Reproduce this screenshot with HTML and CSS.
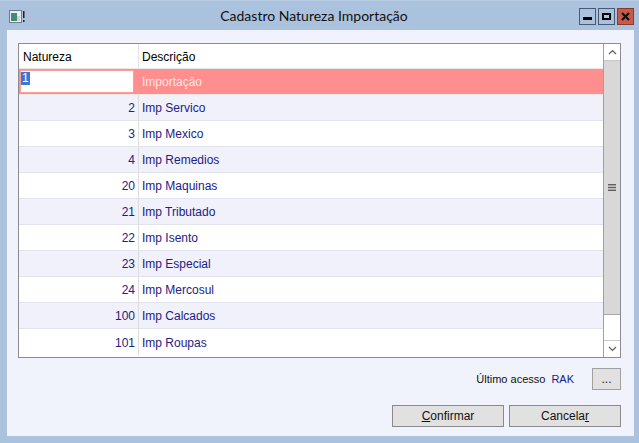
FILE: index.html
```html
<!DOCTYPE html>
<html>
<head>
<meta charset="utf-8">
<link rel="stylesheet" href="styles.css">
</head>
<body>
<div class="window">
  <div class="titlebar">
    <div class="app-icon">
      <svg width="16" height="14" viewBox="0 0 16 14">
        <rect x="0.5" y="0.5" width="12" height="12" fill="#e8ecf0" stroke="#6d7d8a"/>
        <rect x="2" y="3" width="6" height="8" fill="#3f8a78"/>
        <rect x="8" y="6" width="3" height="5" fill="#c9d3da"/>
        <rect x="14" y="1" width="1.5" height="7" fill="#222"/>
        <rect x="14" y="10" width="1.5" height="2" fill="#222"/>
      </svg>
    </div>
    <div class="title">Cadastro Natureza Importação</div>
    <div class="controls">
      <div class="ctl"><span class="min-bar"></span></div>
      <div class="ctl"><span class="max-box"></span></div>
      <div class="ctl close">
        <svg width="9" height="9" viewBox="0 0 9 9"><path d="M1 1 L8 8 M8 1 L1 8" stroke="#111" stroke-width="2.2"/></svg>
      </div>
    </div>
  </div>
  <div class="client">
    <div class="grid">
      <div class="table">
        <div class="row header">
          <div class="c-num">Natureza</div>
          <div class="c-desc">Descrição</div>
        </div>
        <div class="row selected">
          <div class="c-num"><div class="editor"><span class="sel">1</span></div></div>
          <div class="c-desc">Importação</div>
        </div>
        <div class="row alt"><div class="c-num">2</div><div class="c-desc">Imp Servico</div></div>
        <div class="row"><div class="c-num">3</div><div class="c-desc">Imp Mexico</div></div>
        <div class="row alt"><div class="c-num">4</div><div class="c-desc">Imp Remedios</div></div>
        <div class="row"><div class="c-num">20</div><div class="c-desc">Imp Maquinas</div></div>
        <div class="row alt"><div class="c-num">21</div><div class="c-desc">Imp Tributado</div></div>
        <div class="row"><div class="c-num">22</div><div class="c-desc">Imp Isento</div></div>
        <div class="row alt"><div class="c-num">23</div><div class="c-desc">Imp Especial</div></div>
        <div class="row"><div class="c-num">24</div><div class="c-desc">Imp Mercosul</div></div>
        <div class="row alt"><div class="c-num">100</div><div class="c-desc">Imp Calcados</div></div>
        <div class="row last"><div class="c-num">101</div><div class="c-desc">Imp Roupas</div></div>
      </div>
      <div class="scrollbar">
        <div class="sb-btn">
          <svg width="9" height="6" viewBox="0 0 9 6"><path d="M1 5 L4.5 1.5 L8 5" fill="none" stroke="#606060" stroke-width="1.2"/></svg>
        </div>
        <div class="sb-thumb">
          <svg width="8" height="7" viewBox="0 0 8 7"><rect x="0" y="0" width="8" height="1.4" fill="#606060"/><rect x="0" y="2.8" width="8" height="1.4" fill="#606060"/><rect x="0" y="5.6" width="8" height="1.4" fill="#606060"/></svg>
        </div>
        <div class="sb-track"></div>
        <div class="sb-btn down">
          <svg width="9" height="6" viewBox="0 0 9 6"><path d="M1 1 L4.5 4.5 L8 1" fill="none" stroke="#606060" stroke-width="1.2"/></svg>
        </div>
      </div>
    </div>
    <div class="info">
      <span class="info-label">Último acesso</span>
      <span class="info-user">RAK</span>
      <button class="btn dots">...</button>
    </div>
    <div class="actions">
      <button class="btn action"><u>C</u>onfirmar</button>
      <button class="btn action">Cancela<u>r</u></button>
    </div>
  </div>
</div>
</body>
</html>
```

FILE: styles.css
```css
* { box-sizing: border-box; }
html, body { margin: 0; padding: 0; }
body {
  width: 639px;
  height: 443px;
  overflow: hidden;
  font-family: "Liberation Sans", Arial, sans-serif;
}
.window {
  width: 639px;
  height: 443px;
  background: #aac2de;
  border-top: 1px solid #b9cde4;
  display: flex;
  flex-direction: column;
  padding: 0 5px 7px 7px;
}
.titlebar {
  height: 29px;
  display: flex;
  align-items: center;
}
.app-icon {
  width: 16px;
  height: 14px;
  margin-left: 2px;
  margin-top: 2px;
}
.app-icon svg { display: block; }
.title {
  flex: 1;
  text-align: center;
  font-family: Lato, "Noto Sans", sans-serif;
  font-size: 14px;
  color: #111;
  margin-left: 24px;
}
.controls {
  display: flex;
  gap: 2px;
  margin-top: 1px;
}
.ctl {
  width: 17px;
  height: 17px;
  border: 1px solid #4a5a72;
  background: #aac2de;
  display: flex;
  align-items: center;
  justify-content: center;
}
.min-bar {
  width: 9px;
  height: 3px;
  background: #000;
  margin-top: 4px;
}
.max-box {
  width: 9px;
  height: 7px;
  border: 2px solid #000;
}
.ctl.close {
  background: #c85a48;
  border-color: #8a3a2c;
}
.ctl.close svg { display: block; }
.client {
  flex: 1;
  background: #f0f3fb;
  display: flex;
  flex-direction: column;
  padding: 13px 13px 0 11px;
}
.grid {
  height: 315px;
  border: 1px solid #8c8c8c;
  display: flex;
  background: #ffffff;
}
.table {
  flex: 1;
  display: flex;
  flex-direction: column;
  font-size: 12px;
}
.row {
  display: flex;
  height: 26px;
  border-bottom: 1px solid #e2e4ec;
  color: #1e2084;
  background: #ffffff;
}
.row.alt { background: #f0f1fb; }
.row.header {
  height: 25px;
  color: #000;
  border-bottom: 1px solid #e8e8e8;
}
.row.last { border-bottom: none; }
.c-num {
  width: 120px;
  flex-shrink: 0;
  border-right: 1px solid #dcdcdc;
  text-align: right;
  padding-right: 3px;
  display: flex;
  align-items: center;
  justify-content: flex-end;
  padding-top: 1px;
}
.c-desc {
  flex: 1;
  padding-left: 3px;
  display: flex;
  align-items: center;
  padding-top: 1px;
}
.header .c-num {
  justify-content: flex-start;
  padding-left: 4px;
  border-right: 1px solid #e4e4e4;
}
.row.selected {
  background: #ff8e8e;
  border-bottom: 1px solid #f0e6e6;
}
.row.selected .c-num {
  border-right: none;
  padding: 1px 0 1px 1px;
  align-items: stretch;
  justify-content: flex-start;
}
.row.selected .c-desc { color: #ffe4e4; }
.editor {
  width: 114px;
  background: #ffffff;
  border: 1px solid #ff9c9c;
  text-align: left;
  padding: 1px 0 0 0;
  line-height: 13px;
}
.sel {
  background: #3a78d8;
  color: #ffffff;
  padding: 0 1px;
  display: inline-block;
}
.scrollbar {
  width: 17px;
  border-left: 1px solid #a0a0a0;
  display: flex;
  flex-direction: column;
  background: #ffffff;
}
.sb-btn {
  height: 17px;
  display: flex;
  align-items: center;
  justify-content: center;
  border-bottom: 1px solid #c8c8c8;
}
.sb-btn.down {
  border-bottom: none;
  border-top: 1px solid #c8c8c8;
}
.sb-btn svg { display: block; }
.sb-thumb {
  height: 254px;
  background: #d8d8d8;
  border-bottom: 1px solid #a8a8a8;
  display: flex;
  align-items: center;
  justify-content: center;
}
.sb-track { flex: 1; }
.info {
  display: flex;
  align-items: center;
  justify-content: flex-end;
  margin-top: 10px;
  height: 22px;
  font-size: 11px;
}
.info-label { color: #111; }
.info-user { color: #1e2084; margin-left: 6px; margin-right: 18px; }
.btn {
  font-family: "Liberation Sans", Arial, sans-serif;
  font-size: 12px;
  color: #111;
  background: #e1e1e1;
  border: 1px solid #a0a0a0;
  padding: 0;
  margin: 0;
}
.btn.dots {
  width: 29px;
  height: 22px;
  line-height: 18px;
}
.actions {
  display: flex;
  justify-content: flex-end;
  gap: 5px;
  margin-top: 15px;
}
.btn.action {
  width: 112px;
  height: 22px;
  border-color: #8a8a8a;
}
u { text-decoration: underline; }
```
